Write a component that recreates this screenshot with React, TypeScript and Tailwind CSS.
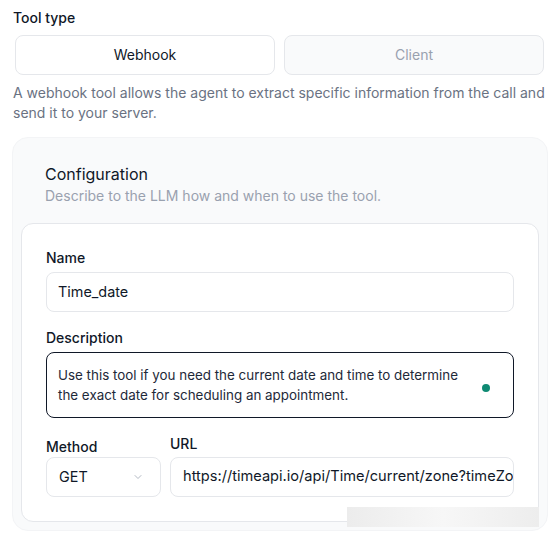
import { ChevronDown } from "lucide-react";

export default function App() {
  return (
    <div className="relative min-h-[542px] bg-white pl-3 pr-px pt-2 font-['Inter',sans-serif] text-gray-900">
      <div className="pl-px text-sm font-medium leading-5">Tool type</div>

      {/* Tool type switch */}
      <div className="ml-[3px] mr-[4px] mt-[7px] grid grid-cols-2 gap-[9px]">
        <button className="h-10 rounded-lg border border-gray-200 bg-white text-sm text-gray-900">
          Webhook
        </button>
        <button className="h-10 rounded-lg border border-gray-200 bg-gray-50 text-sm text-gray-400">
          Client
        </button>
      </div>

      <p className="mt-2 pl-px text-sm leading-5 text-gray-500">
        A webhook tool allows the agent to extract specific information from the call and send it to your
        server.
      </p>

      {/* Configuration card */}
      <div className="mt-[14px] rounded-2xl border border-gray-100 bg-gray-50 px-2 pb-2 pt-6">
        <div className="px-6">
          <div className="text-base leading-6 text-gray-900">Configuration</div>
          <div className="text-sm leading-5 text-gray-400">Describe to the LLM how and when to use the tool.</div>
        </div>

        <div className="mt-[17px] rounded-xl border border-gray-200 bg-white px-6 pb-6 pt-6">
          <label className="block text-sm font-medium leading-5">Name</label>
          <div className="mt-1 flex h-10 items-center rounded-lg border border-gray-200 px-[11px] text-[14.4px] text-gray-900">
            Time_date
          </div>

          <label className="mt-4 block text-sm font-medium leading-5">Description</label>
          <div className="relative mt-1 rounded-lg border border-gray-900 px-[11px] py-3 text-[13.4px] leading-5 text-gray-800">
            <div className="pr-8">
              Use this tool if you need the current date and time to determine the exact date for scheduling an
              appointment.
            </div>
            <span className="absolute right-[23px] top-[31px] h-2 w-2 rounded-full bg-[#0f8a73]" />
          </div>

          <div className="mt-4 flex items-end gap-[9px]">
            <div className="w-[115px] shrink-0">
              <label className="block text-sm font-medium leading-5">Method</label>
              <div className="flex h-10 items-center justify-between rounded-lg border border-gray-200 pl-3 pr-[16px] text-[14.4px] text-gray-900">
                <span>GET</span>
                <ChevronDown className="h-3 w-3 text-gray-400" strokeWidth={1.5} />
              </div>
            </div>
            <div className="min-w-0 flex-1">
              <label className="mb-[3px] block text-sm font-medium leading-5">URL</label>
              <div className="flex h-10 items-center overflow-hidden whitespace-nowrap rounded-lg border border-gray-200 px-3 text-[14.6px] text-gray-900">
                https://timeapi.io/api/Time/current/zone?timeZone=Europe/Amsterdam
              </div>
            </div>
          </div>
        </div>
      </div>

      {/* blurred overlay at the bottom right */}
      <div className="absolute left-[347px] top-[507px] h-5 w-[192px] bg-gradient-to-r from-[#ececec] via-[#f7f7f7] to-[#ededed]" />
    </div>
  );
}
